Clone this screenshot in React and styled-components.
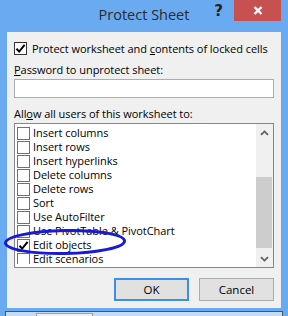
import React from 'react';
import styled, { createGlobalStyle } from 'styled-components';

const GlobalStyle = createGlobalStyle`
  html, body {
    margin: 0;
    padding: 0;
  }
  body {
    background: #6aaaf0;
    font-family: "Open Sans", "Noto Sans", sans-serif;
  }
`;

const Window = styled.div`
  position: relative;
  width: 288px;
  height: 316px;
  background: #6aaaf0;
  display: flex;
  flex-direction: column;
  overflow: hidden;
`;

const TitleBar = styled.div`
  height: 32px;
  flex: none;
  display: grid;
  grid-template-columns: 1fr auto 1fr;
  align-items: start;
`;

const Title = styled.div`
  grid-column: 2;
  font-size: 14.5px;
  line-height: 30px;
  color: #2b2b2b;
  white-space: nowrap;
`;

const Controls = styled.div`
  grid-column: 3;
  display: flex;
  justify-content: flex-end;
  align-items: flex-start;
  padding-right: 7px;
`;

const Help = styled.span`
  font-family: "DejaVu Sans", sans-serif;
  font-weight: bold;
  font-size: 15px;
  line-height: 22px;
  color: #222;
  margin-right: 11px;
`;

const CloseButton = styled.div`
  flex: none;
  width: 47px;
  height: 21px;
  background: #c75050;
  display: flex;
  align-items: center;
  justify-content: center;
`;

const Client = styled.div`
  margin: 0 7px;
  height: 276px;
  flex: none;
  background: #f0f0f0;
  padding: 10px 7px 0;
  box-sizing: border-box;
  display: flex;
  flex-direction: column;
  font-size: 11px;
  letter-spacing: -0.05px;
  color: #000;
`;

const CheckRow = styled.label`
  flex: none;
  display: flex;
  align-items: center;
  gap: ${p => p.$gap || 4}px;
  height: ${p => p.$height || 13}px;
  line-height: ${p => p.$height || 13}px;
  white-space: nowrap;
`;

const Box = styled.span`
  flex: none;
  width: 13px;
  height: 13px;
  box-sizing: border-box;
  border: 1px solid ${p => p.$dark ? '#333' : '#707070'};
  background: #fff;
  display: flex;
  align-items: center;
  justify-content: center;
`;

const Label = styled.div`
  height: 16px;
  line-height: 16px;
  margin-top: ${p => p.$top}px;
  white-space: nowrap;
`;

const TextBox = styled.div`
  margin-top: 1px;
  height: 19px;
  box-sizing: border-box;
  border: 1px solid #abadb3;
  background: #fff;
`;

const ListBox = styled.div`
  margin-top: 1px;
  height: 145px;
  box-sizing: border-box;
  border: 1px solid #828790;
  background: #fff;
  display: flex;
`;

const Items = styled.div`
  flex: 1;
  margin: 2px 0 3px 2px;
  display: flex;
  flex-direction: column;
  overflow: hidden;
`;

const ScrollBar = styled.div`
  width: 17px;
  background: #f0f0f0;
  display: flex;
  flex-direction: column;
`;

const Arrow = styled.div`
  height: 17px;
  display: flex;
  align-items: center;
  justify-content: center;
`;

const Track = styled.div`
  flex: 1;
  display: flex;
  flex-direction: column;
`;

const Thumb = styled.div`
  margin: 36px 1px 0 0;
  height: 71px;
  background: #cdcdcd;
`;

const Buttons = styled.div`
  margin-top: 10px;
  display: flex;
  justify-content: flex-end;
  gap: 10px;
`;

const Button = styled.button`
  width: 75px;
  height: 23px;
  box-sizing: border-box;
  font-family: inherit;
  font-size: 11.5px;
  color: #000;
  background: #e1e1e1;
  border: 1px solid ${p => p.$primary ? '#3c8ee6' : '#adadad'};
  box-shadow: ${p => p.$primary ? 'inset 0 0 0 1px #3c8ee6' : 'none'};
  padding: 0;
`;

const FrameBottom = styled.div`
  height: 3px;
  flex: none;
`;

const BackWindow = styled.div`
  flex: 1;
  margin: 0 5px;
  border: 1px solid #555;
  border-bottom: none;
  background: #c6dcf6;
  padding: 1px 0 0 30px;
`;

const BackButton = styled.div`
  width: 57px;
  height: 10px;
  box-sizing: border-box;
  border: 1px solid #a0a0a0;
  background: #f0f0f0;
`;

const Circle = styled.svg`
  position: absolute;
  left: 2px;
  top: 227px;
`;

const Check = () => (
  <svg width="11" height="11" viewBox="0 0 11 11">
    <path d="M1.5 5.8 L4.2 8.6 L9.6 1.8" fill="none" stroke="#000" strokeWidth="2" />
  </svg>
);

const Chevron = ({ down }) => (
  <svg width="9" height="6" viewBox="0 0 9 6">
    <path d={down ? 'M1 1.2 L4.5 4.6 L8 1.2' : 'M1 4.8 L4.5 1.4 L8 4.8'} fill="none" stroke="#606060" strokeWidth="1.8" />
  </svg>
);

const items = [
  ['Insert columns', false],
  ['Insert rows', false],
  ['Insert hyperlinks', false],
  ['Delete columns', false],
  ['Delete rows', false],
  ['Sort', false],
  ['Use AutoFilter', false],
  ['Use PivotTable & PivotChart', false],
  ['Edit objects', true],
  ['Edit scenarios', false],
];

export default function App() {
  return (
    <Window>
      <GlobalStyle />
      <TitleBar>
        <Title>Protect Sheet</Title>
        <Controls>
          <Help>?</Help>
          <CloseButton>
            <svg width="10" height="9" viewBox="0 0 10 9">
              <path d="M1.5 1 L8.5 8 M8.5 1 L1.5 8" stroke="#fff" strokeWidth="2.4" />
            </svg>
          </CloseButton>
        </Controls>
      </TitleBar>
      <Client>
        <CheckRow $gap={5}>
          <Box $dark><Check /></Box>
          <span>Protect worksheet and <u>c</u>ontents of locked cells</span>
        </CheckRow>
        <Label $top={7}><u>P</u>assword to unprotect sheet:</Label>
        <TextBox />
        <Label $top={8}>All<u>o</u>w all users of this worksheet to:</Label>
        <ListBox>
          <Items>
            {items.map(([name, on]) => (
              <CheckRow key={name} $height={14} $gap={3}>
                <Box>{on && <Check />}</Box>
                <span>{name}</span>
              </CheckRow>
            ))}
          </Items>
          <ScrollBar>
            <Arrow><Chevron /></Arrow>
            <Track><Thumb /></Track>
            <Arrow><Chevron down /></Arrow>
          </ScrollBar>
        </ListBox>
        <Buttons>
          <Button $primary>OK</Button>
          <Button>Cancel</Button>
        </Buttons>
      </Client>
      <FrameBottom />
      <BackWindow>
        <BackButton />
      </BackWindow>
      <Circle width="126" height="30" viewBox="0 0 126 30">
        <ellipse cx="63" cy="15" rx="59.5" ry="11.5" fill="none" stroke="#1a1ad4" strokeWidth="3" transform="rotate(-1 63 15)" />
      </Circle>
    </Window>
  );
}
